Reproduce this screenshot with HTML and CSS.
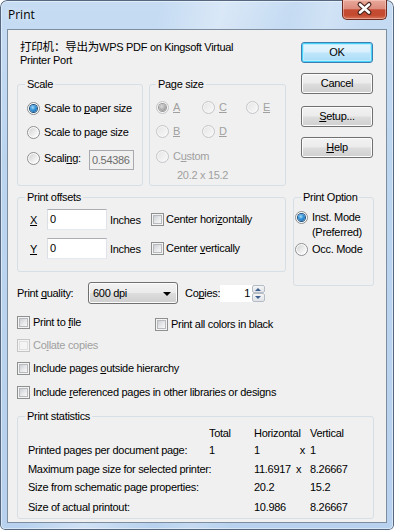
FILE: index.html
```html
<!DOCTYPE html>
<html lang="en">
<head>
<meta charset="utf-8">
<title>Print</title>
<link rel="stylesheet" href="styles.css">
</head>
<body>
<div class="window">
  <div class="titlebar">
    <span class="title">Print</span>
    <div class="close">
      <svg width="45" height="20" viewBox="0 0 45 20">
        <path d="M18 5.5 L27 13.5 M27 5.5 L18 13.5" stroke="#4a2620" stroke-width="5" stroke-linecap="round"/>
        <path d="M18 5.5 L27 13.5 M27 5.5 L18 13.5" stroke="#ffffff" stroke-width="2.6" stroke-linecap="round"/>
      </svg>
    </div>
  </div>
  <div class="client">
    <div class="top">
      <div class="left">
        <div class="printer"><span class="cjk">打印机：导出为</span>WPS PDF on Kingsoft Virtual<br>Printer Port</div>
        <div class="groups">
          <div class="group g-scale">
            <div class="legend">Scale</div>
            <div class="radio s1"><span class="rb on"></span><span>Scale to <u>p</u>aper size</span></div>
            <div class="radio s2"><span class="rb"></span><span>Scale to page size</span></div>
            <div class="s3">
              <div class="radio"><span class="rb"></span><span class="sl">Scali<u>n</u>g:</span></div>
              <div class="edit ro">0.54386</div>
            </div>
          </div>
          <div class="group g-page">
            <div class="legend">Page size</div>
            <div class="pgrid">
              <div class="radio dis"><span class="rb on"></span><span><u>A</u></span></div>
              <div class="radio dis"><span class="rb"></span><span><u>C</u></span></div>
              <div class="radio dis"><span class="rb"></span><span><u>E</u></span></div>
            </div>
            <div class="pgrid p2">
              <div class="radio dis"><span class="rb"></span><span><u>B</u></span></div>
              <div class="radio dis"><span class="rb"></span><span><u>D</u></span></div>
            </div>
            <div class="radio dis p3"><span class="rb"></span><span>C<u>u</u>stom</span></div>
            <div class="dims">20.2 x 15.2</div>
          </div>
        </div>
      </div>
      <div class="buttons">
        <div class="btn def">OK</div>
        <div class="btn b2">Cancel</div>
        <div class="btn b3"><u>S</u>etup...</div>
        <div class="btn b4"><u>H</u>elp</div>
      </div>
    </div>

    <div class="mid">
      <div class="midleft">
        <div class="group g-off">
          <div class="legend">Print offsets</div>
          <div class="offrow o1">
            <span class="axis"><u>X</u></span>
            <div class="edit num">0</div>
            <span class="inch">Inches</span>
            <div class="check"><span class="cb"></span><span>Center hori<u>z</u>ontally</span></div>
          </div>
          <div class="offrow o2">
            <span class="axis"><u>Y</u></span>
            <div class="edit num">0</div>
            <span class="inch">Inches</span>
            <div class="check"><span class="cb"></span><span>Center <u>v</u>ertically</span></div>
          </div>
        </div>

        <div class="quality">
          <span class="qlabel">Print <u>q</u>uality:</span>
          <div class="combo"><span>600 dpi</span><span class="arrow"></span></div>
          <span class="clabel">Co<u>p</u>ies:</span>
          <div class="copies">1</div>
          <div class="spin"><span class="up"></span><span class="down"></span></div>
        </div>

        <div class="crow c1">
          <div class="check w1"><span class="cb"></span><span>Print to <u>f</u>ile</span></div>
          <div class="check black"><span class="cb"></span><span>Print all colors in black</span></div>
        </div>
        <div class="check crow c2 dis"><span class="cb"></span><span>Co<u>l</u>late copies</span></div>
        <div class="check crow c3"><span class="cb"></span><span>Include pages <u>o</u>utside hierarchy</span></div>
        <div class="check crow c4"><span class="cb"></span><span>Include <u>r</u>eferenced pages in other libraries or designs</span></div>
      </div>

      <div class="group g-opt">
        <div class="legend">Print Option</div>
        <div class="radio o-inst"><span class="rb on"></span><span class="two">Inst. Mode<br>(Preferred)</span></div>
        <div class="radio o-occ"><span class="rb"></span><span>Occ. Mode</span></div>
      </div>
    </div>

    <div class="group g-stats">
      <div class="legend">Print statistics</div>
      <div class="stats">
        <span></span><span>Total</span><span>Horizontal</span><span></span><span>Vertical</span>
        <span>Printed pages per document page:</span><span>1</span><span>1</span><span class="xr">x</span><span>1</span>
        <span>Maximum page size for selected printer:</span><span></span><span>11.6917</span><span class="xl">x</span><span>8.26667</span>
        <span>Size from schematic page properties:</span><span></span><span>20.2</span><span></span><span>15.2</span>
        <span>Size of actual printout:</span><span></span><span>10.986</span><span></span><span>8.26667</span>
      </div>
    </div>
  </div>
</div>
</body>
</html>
```

FILE: styles.css
```css
* { box-sizing: border-box; }
html, body { margin: 0; padding: 0; }
body {
  width: 394px;
  height: 530px;
  overflow: hidden;
  background: #ffffff;
  font-family: "Liberation Sans", Arial, "Noto Sans CJK SC", sans-serif;
  font-size: 11px;
  letter-spacing: -0.3px;
  color: #000;
}
u { text-decoration: underline; text-decoration-thickness: 1px; text-underline-offset: 1px; text-decoration-skip-ink: none; }

.window {
  width: 394px;
  height: 530px;
  border-radius: 7px 7px 5px 5px;
  background:
    linear-gradient(105deg, rgba(255,255,255,0) 30%, rgba(255,255,255,0.35) 42%, rgba(255,255,255,0) 55%, rgba(255,255,255,0.2) 62%, rgba(255,255,255,0) 70%),
    linear-gradient(180deg, #c6dcf3 0%, #bcd5ef 30%, #b7d1ee 100%);
  box-shadow: inset 0 0 0 1px #55687f, inset 0 0 0 2px rgba(255,255,255,0.45);
  display: flex;
  flex-direction: column;
}

.titlebar {
  height: 29px;
  display: flex;
  justify-content: space-between;
  align-items: flex-start;
}
.title {
  margin: 6px 0 0 8px;
  font-family: "Open Sans", "Noto Sans", sans-serif;
  font-size: 12px;
  letter-spacing: 0;
  line-height: 17px;
  color: #000;
  text-shadow: 0 0 6px rgba(255,255,255,0.9);
}
.close {
  width: 45px;
  height: 20px;
  margin-right: 7px;
  border: 1px solid #6d2b22;
  border-top: none;
  border-radius: 0 0 5px 5px;
  background: linear-gradient(180deg, #e9a99b 0%, #dc8d7e 45%, #c54b33 52%, #c3492f 80%, #d6765a 100%);
  box-shadow: inset 0 0 0 1px rgba(255,220,210,0.45);
}
.close svg { display: block; margin: -1px 0 0 -1px; }

.client {
  margin-left: 7px;
  width: 380px;
  height: 494px;
  border: 1px solid #7d8ea1;
  background: #f0f0f0;
  padding: 0 12px 0 9px;
}

/* top section */
.top { display: flex; margin-top: 11px; }
.left { width: 269px; }
.printer { margin-left: 3px; line-height: 13px; height: 26px; }
.cjk { font-size: 11.5px; line-height: 11px; letter-spacing: -0.2px; }
.groups { display: flex; gap: 6px; margin-top: 17px; }

.group { border: 1px solid #d5dfe5; border-radius: 3px; }
.legend {
  display: block;
  width: fit-content;
  margin-top: -7px;
  padding: 0 2px;
  background: #f0f0f0;
  line-height: 13px;
}

.g-scale { width: 126px; height: 102px; padding-left: 9px; }
.g-scale .legend { margin-left: -2px; }
.g-page { width: 137px; height: 102px; padding-left: 6px; }
.g-page .legend { margin-left: 0; }

.radio { display: flex; align-items: center; gap: 4px; height: 13px; line-height: 13px; white-space: nowrap; }
.rb {
  flex: none;
  position: relative;
  width: 13px;
  height: 13px;
  border-radius: 50%;
  border: 1px solid #8c8e91;
  background: #fdfdfd;
}
.rb::after {
  content: "";
  position: absolute;
  left: 1px; top: 1px;
  width: 9px; height: 9px;
  border-radius: 50%;
  background: linear-gradient(135deg, #d2d3d5 0%, #eaeaea 50%, #ffffff 100%);
}
.rb.on::after {
  left: 2px; top: 2px;
  width: 7px; height: 7px;
  background: radial-gradient(circle at 40% 35%, #a8dcfa 0, #3a98da 40%, #0e5598 100%);
  box-shadow: 0 0 0 1px #1f4f7e;
}
.dis { color: #a0a0a0; }
.dis .rb { border-color: #c3c5c8; background: #f6f6f6; }
.dis .rb::after { background: linear-gradient(135deg, #e6e6e6, #f8f8f8); }
.dis .rb.on::after { background: radial-gradient(circle at 40% 35%, #dcdcdc 0, #a6a6a6 60%, #8a8a8a 100%); box-shadow: 0 0 0 1px #9a9a9a; }

.s1 { margin-top: 11px; }
.s2 { margin-top: 11px; }
.s3 { display: flex; align-items: flex-start; margin-top: 11px; height: 20px; }
.s3 .radio { margin-top: 2px; }
.sl { width: 45px; }

.edit {
  border: 1px solid #abadb3;
  border-color: #abadb3 #e2e3ea #e3e9ef #dbdfe6;
  background: #fff;
}
.edit.ro {
  width: 45px;
  height: 20px;
  line-height: 18px;
  padding-left: 2px;
  background: #f0f0f0;
  border-color: #a7a9ac;
  color: #6d6d6d;
}

.pgrid { display: grid; grid-template-columns: 46px 44px auto; margin-top: 10px; }
.p2 { margin-top: 11px; }
.p3 { margin-top: 12px; }
.dims { margin: 6px 0 0 21px; line-height: 13px; color: #a0a0a0; }

/* buttons */
.buttons { display: flex; flex-direction: column; width: 72px; margin: 1px 0 0 15px; }
.btn {
  height: 21px;
  line-height: 19px;
  text-align: center;
  border: 1px solid #707070;
  border-radius: 3px;
  background: linear-gradient(180deg, #f2f2f2 0%, #ebebeb 48%, #dddddd 52%, #cfcfcf 100%);
  box-shadow: inset 0 0 0 1px #fcfcfc;
}
.btn.def {
  border-color: #3c7fb1;
  background: linear-gradient(180deg, #e5f5fd 0%, #d8f0fc 48%, #bfe6fb 52%, #a9dbf6 100%);
  box-shadow: inset 0 0 0 1px #48d1fb, inset 0 0 0 2px #b9ecfd;
}
.b2 { margin-top: 10px; }
.b3 { margin-top: 12px; }
.b4 { margin-top: 10px; }

/* middle */
.mid { display: flex; margin-top: 11px; }
.midleft { width: 269px; }
.g-off { width: 269px; height: 75px; padding-left: 12px; }
.g-off .legend { margin-left: -5px; }
.offrow { display: flex; align-items: center; height: 21px; }
.o1 { margin-top: 5px; }
.o2 { margin-top: 8px; }
.axis { width: 17px; }
.edit.num { width: 60px; height: 21px; line-height: 19px; padding-left: 2px; }
.inch { width: 41px; margin-left: 3px; }

.check { display: flex; align-items: center; gap: 3px; height: 13px; line-height: 13px; white-space: nowrap; }
.cb {
  flex: none;
  position: relative;
  width: 13px;
  height: 13px;
  border: 1px solid #8e8f8f;
  background: #f4f4f4;
}
.cb::after {
  content: "";
  position: absolute;
  left: 1px; top: 1px; right: 1px; bottom: 1px;
  border: 1px solid #b8babd;
  background: linear-gradient(135deg, #cbcfd5 0%, #e8e9ea 55%, #f7f7f7 100%);
}
.check.dis .cb { border-color: #c5c5c5; }
.check.dis .cb::after { border-color: #e0e0e0; background: #f4f4f4; }
.offrow .check { gap: 2px; }

.quality { display: flex; align-items: center; height: 22px; margin-top: 10px; }
.qlabel { width: 71px; }
.combo {
  width: 90px;
  height: 22px;
  border: 1px solid #707070;
  border-radius: 3px;
  background: linear-gradient(180deg, #f2f2f2 0%, #ebebeb 48%, #dddddd 52%, #cfcfcf 100%);
  box-shadow: inset 0 0 0 1px #fcfcfc;
  display: flex;
  align-items: center;
  justify-content: space-between;
  padding: 0 6px 0 4px;
}
.arrow {
  width: 0; height: 0;
  border-left: 4px solid transparent;
  border-right: 4px solid transparent;
  border-top: 4px solid #000;
  margin-top: 1px;
}
.clabel { margin-left: 7px; width: 35px; }
.copies {
  width: 32px;
  height: 17px;
  line-height: 16px;
  text-align: right;
  padding-right: 2px;
  background: #fff;
}
.spin { width: 13px; height: 17px; display: flex; flex-direction: column; background: #fff; }
.spin span {
  flex: 1;
  position: relative;
  border: 1px solid #b6bcc6;
  border-radius: 2px;
  background: linear-gradient(180deg, #f5f5f5, #dfe3e8);
}
.spin span::after {
  content: "";
  position: absolute;
  left: 2px; top: 2px;
  width: 0; height: 0;
  border-left: 3.5px solid transparent;
  border-right: 3.5px solid transparent;
}
.spin .up::after { border-bottom: 3px solid #3d5f8f; }
.spin .down::after { border-top: 3px solid #3d5f8f; top: 2px; }

.crow { margin-top: 12px; }
.c1 { display: flex; height: 13px; align-items: flex-start; }
.w1 { width: 138px; }
.black { margin-top: 2px; }
.c2 { margin-top: 10px; }
.c3 { margin-top: 10px; }
.c4 { margin-top: 11px; }

.g-opt { width: 81px; height: 89px; margin-left: 7px; padding-left: 1px; }
.g-opt .legend { margin-left: 6px; }
.o-inst { margin-top: 6px; align-items: flex-start; height: 30px; }
.o-inst .rb { margin-top: 1px; }
.two { line-height: 15px; }
.o-occ { margin-top: 3px; }

/* statistics */
.g-stats { width: 357px; height: 103px; margin-top: 17px; padding-left: 10px; }
.g-stats .legend { margin-left: -3px; }
.stats {
  display: grid;
  grid-template-columns: 181px 45px 42px 14px auto;
  grid-template-rows: 17px 19px 18px 20px 13px;
  line-height: 13px;
  margin-top: 4px;
  white-space: nowrap;
}
.xr { text-align: right; padding-right: 5px; }
.xl { text-align: left; }
```
